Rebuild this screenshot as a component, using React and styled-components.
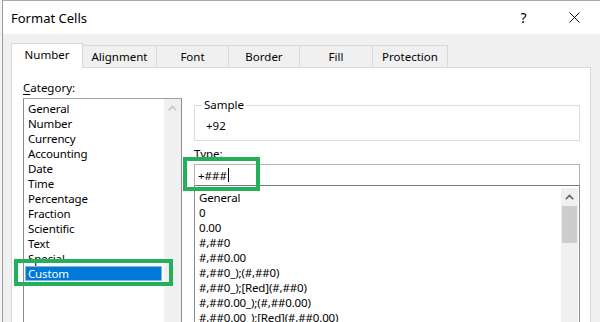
import React from 'react';
import styled, { createGlobalStyle } from 'styled-components';

const GlobalStyle = createGlobalStyle`
  html, body {
    margin: 0;
    padding: 0;
    background: #fff;
  }
  body {
    font-family: "Noto Sans", "Open Sans", sans-serif;
    color: #000;
  }
`;

const Screen = styled.div`
  width: 600px;
  height: 322px;
  overflow: hidden;
  display: flex;
  background: #f4f4f4;
`;

const Window = styled.div`
  flex: 1;
  height: 360px;
  display: flex;
  flex-direction: column;
  margin-left: 2px;
  border-left: 1px solid #9a9a9a;
  border-top: 1px solid #a8a8a8;
  background: #f0f0f0;
`;

const TitleBar = styled.div`
  height: 33px;
  display: flex;
  align-items: center;
  background: #fff;
  padding-left: 8px;
`;

const Title = styled.div`
  flex: 1;
  font-size: 13px;
  margin-top: 1px;
`;

const TitleButton = styled.div`
  width: 51px;
  height: 33px;
  display: flex;
  align-items: center;
  justify-content: center;
  font-size: 14px;
`;

const Body = styled.div`
  flex: 1;
  display: flex;
  flex-direction: column;
  padding: 9px 9px 0 8px;
`;

const TabRow = styled.div`
  display: flex;
  align-items: flex-end;
  height: 24px;
  position: relative;
  z-index: 1;
`;

const Tab = styled.div`
  width: ${p => p.$w}px;
  box-sizing: border-box;
  height: ${p => (p.$active ? 25 : 22)}px;
  margin-bottom: ${p => (p.$active ? -1 : 0)}px;
  display: flex;
  align-items: center;
  justify-content: center;
  padding-bottom: ${p => (p.$active ? 3 : 0)}px;
  font-size: 11.5px;
  background: ${p => (p.$active ? '#fff' : '#f0f0f0')};
  border: 1px solid #d9d9d9;
  border-bottom: none;
  border-left: ${p => (p.$first ? '1px solid #d9d9d9' : 'none')};
`;

const Panel = styled.div`
  flex: 1;
  display: flex;
  gap: 12px;
  background: #fff;
  border: 1px solid #d9d9d9;
  padding: 12px 10px 0 11px;
`;

const LeftColumn = styled.div`
  width: 159px;
  display: flex;
  flex-direction: column;
`;

const RightColumn = styled.div`
  flex: 1;
  display: flex;
  flex-direction: column;
`;

const Label = styled.div`
  font-size: 11.5px;
  line-height: 16px;
  margin-bottom: 2px;
  margin-top: ${p => p.$top || 0}px;
`;

const Underlined = styled.span`
  text-decoration: underline;
  text-underline-offset: 2px;
`;

const ListBox = styled.div`
  flex: 1;
  display: flex;
  border: 1px solid #8d8d8d;
  border-top-color: ${p => (p.$joined ? 'transparent' : '#a0a0a0')};
  border-top-width: ${p => (p.$joined ? 0 : 1)}px;
  background: #fff;
`;

const Items = styled.div`
  flex: 1;
  padding-top: ${p => p.$pad}px;
`;

const Item = styled.div`
  position: relative;
  height: 15px;
  line-height: 15px;
  font-size: 11.5px;
  letter-spacing: -0.15px;
  padding: 0 3px;
  margin: 0 2px 0 1px;
  white-space: nowrap;
  color: ${p => (p.$selected ? '#fff' : '#000')};
  background: ${p => (p.$selected ? '#0078d7' : 'transparent')};
  box-shadow: ${p => (p.$selected ? 'inset 0 0 0 1px #7fb6ea' : 'none')};
`;

const Highlight = styled.div`
  position: absolute;
  top: ${p => p.$t}px;
  left: ${p => p.$l}px;
  right: ${p => p.$r}px;
  bottom: ${p => p.$b}px;
  border: 4px solid #22b05b;
  pointer-events: none;
`;

const ScrollBar = styled.div`
  width: 17px;
  margin: ${p => (p.$inset ? '2px 1px 0 0' : '0')};
  background: #f0f0f0;
  display: flex;
  flex-direction: column;
`;

const ScrollArrow = styled.div`
  height: 17px;
  display: flex;
  align-items: center;
  justify-content: center;
`;

const Thumb = styled.div`
  height: 37px;
  margin: 1px 1px 0 1px;
  background: #cdcdcd;
`;

const Fieldset = styled.fieldset`
  margin: 17px 0 0 0;
  padding: 5px 10px 6px 11px;
  border: 1px solid #dcdcdc;
  min-width: 0;
`;

const Legend = styled.legend`
  font-size: 11.5px;
  line-height: 16px;
  padding: 0 2px;
  margin-left: -4px;
`;

const SampleValue = styled.div`
  font-size: 11.5px;
  line-height: 16px;
`;

const TypeInput = styled.div`
  position: relative;
  height: 20px;
  display: flex;
  align-items: center;
  padding-left: 3px;
  font-size: 11.5px;
  border: 1px solid #b4b4b4;
  border-bottom-color: #7a7a7a;
  background: #fff;
`;

const Caret = styled.span`
  display: inline-block;
  width: 1px;
  height: 14px;
  background: #000;
  margin-left: 1px;
`;

const Chevron = ({ color }) => (
  <svg width="9" height="6" viewBox="0 0 9 6">
    <polyline points="0.8,5.2 4.5,1.5 8.2,5.2" fill="none" stroke={color} strokeWidth="1.6" />
  </svg>
);

const CloseIcon = () => (
  <svg width="11" height="11" viewBox="0 0 11 11">
    <path d="M0.5 0.5 L10.5 10.5 M10.5 0.5 L0.5 10.5" stroke="#111" strokeWidth="1" />
  </svg>
);

const tabs = [
  { label: 'Number', w: 72 },
  { label: 'Alignment', w: 74 },
  { label: 'Font', w: 72 },
  { label: 'Border', w: 71 },
  { label: 'Fill', w: 73 },
  { label: 'Protection', w: 75 },
];

const categories = [
  'General', 'Number', 'Currency', 'Accounting', 'Date', 'Time',
  'Percentage', 'Fraction', 'Scientific', 'Text', 'Special', 'Custom',
];

const formats = [
  'General',
  '0',
  '0.00',
  '#,##0',
  '#,##0.00',
  '#,##0_);(#,##0)',
  '#,##0_);[Red](#,##0)',
  '#,##0.00_);(#,##0.00)',
  '#,##0.00_);[Red](#,##0.00)',
  '$#,##0_);($#,##0)',
];

const App = () => (
  <>
    <GlobalStyle />
    <Screen>
      <Window>
        <TitleBar>
          <Title>Format Cells</Title>
          <TitleButton>?</TitleButton>
          <TitleButton><CloseIcon /></TitleButton>
        </TitleBar>
        <Body>
          <TabRow>
            {tabs.map((t, i) => (
              <Tab key={t.label} $w={t.w} $active={i === 0} $first={i === 0}>
                {t.label}
              </Tab>
            ))}
          </TabRow>
          <Panel>
            <LeftColumn>
              <Label><Underlined>C</Underlined>ategory:</Label>
              <ListBox>
                <Items $pad={2}>
                  {categories.map(c => (
                    <Item key={c} $selected={c === 'Custom'}>
                      {c}
                      {c === 'Custom' && <Highlight $t={-7} $l={-11} $r={-11} $b={-5} />}
                    </Item>
                  ))}
                </Items>
                <ScrollBar>
                  <ScrollArrow><Chevron color="#c4c4c4" /></ScrollArrow>
                </ScrollBar>
              </ListBox>
            </LeftColumn>
            <RightColumn>
              <Fieldset>
                <Legend>Sample</Legend>
                <SampleValue>+92</SampleValue>
              </Fieldset>
              <Label $top={5}>Type:</Label>
              <TypeInput>
                +###<Caret />
                <Highlight $t={-8} $l={-12} $r={319} $b={-6} />
              </TypeInput>
              <ListBox $joined>
                <Items $pad={4}>
                  {formats.map(f => (
                    <Item key={f}>{f}</Item>
                  ))}
                </Items>
                <ScrollBar $inset>
                  <ScrollArrow><Chevron color="#606060" /></ScrollArrow>
                  <Thumb />
                </ScrollBar>
              </ListBox>
            </RightColumn>
          </Panel>
        </Body>
      </Window>
    </Screen>
  </>
);

export default App;
